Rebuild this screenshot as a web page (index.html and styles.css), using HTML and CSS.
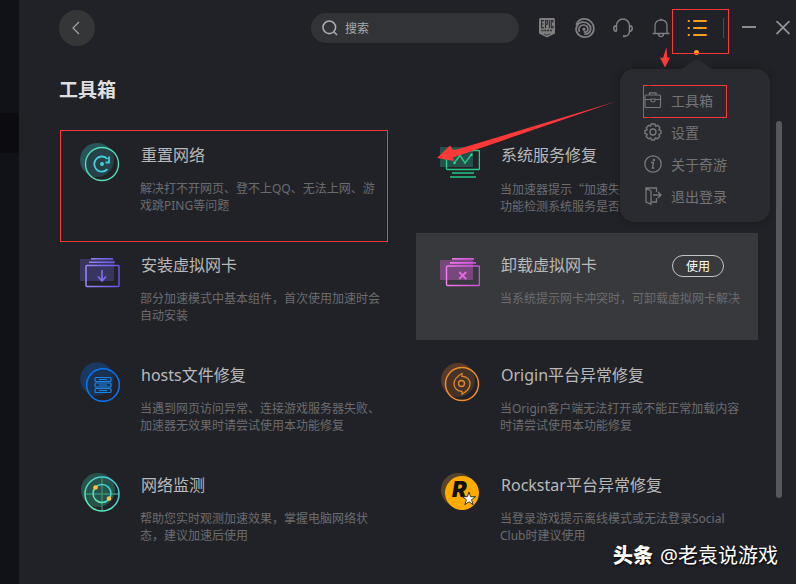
FILE: index.html
```
<!DOCTYPE html>
<html lang="zh-CN">
<head>
<meta charset="utf-8">
<meta name="viewport" content="width=device-width, initial-scale=1">
<title>工具箱</title>
<link rel="stylesheet" href="styles.css">
</head>
<body>
<div class="app">
  <aside class="sidebar"><div class="sidebar-active"></div></aside>
  <main class="main">
    <header class="topbar">
      <button class="back" type="button" aria-label="返回">
        <svg width="12" height="14" viewBox="0 0 12 14"><path d="M8 1 2 7l6 6" fill="none" stroke="#a4a4a6" stroke-width="1.200"/></svg>
      </button>
      <label class="search">
        <svg width="16" height="16" viewBox="0 0 16 16" fill="none" stroke="#a9aaac" stroke-width="1.600"><circle cx="7.300" cy="7.300" r="6.300"/><path d="m11.800 11.800 3.200 3.200"/></svg>
        <input type="search" placeholder="搜索" aria-label="搜索">
      </label>
      <nav class="actions">
        <button class="action" type="button" aria-label="Epic Games">
          <svg width="16" height="20" viewBox="0 0 16 20"><path d="M1.500 0h13Q16 0 16 1.500v14L8 19.500 0 15.500v-14Q0 0 1.500 0z" fill="#7f7f81"/><g fill="none" stroke="#2c2d31" stroke-width="1.100"><path d="M5 2.600H2.600v7H5M2.600 6h2M6.500 10.200V2.600h1.900v3.600H6.500M10.400 2v8.200M14 4.700V2.600h-1.700v7H14V7.500"/><path d="M2.500 12.600h11" stroke-width="1.500" stroke-dasharray="2 .8"/><path d="M5 15.900 8 17.300l3-1.400" stroke-width=".8"/></g></svg>
        </button>
        <button class="action" type="button" aria-label="Ubisoft">
          <svg width="20" height="20" viewBox="0 0 20 20" fill="none" stroke="#7f7f81" stroke-linecap="round"><path d="M1.500 6.200C4-.2 12-.6 16.300 4c3.800 4.200 3.200 10.500-1 13.400-4.400 3-10.800 1.800-13.400-2.900C-.2 10.500 2.200 5 7 4.200c4.800-.8 8.600 2.600 8.700 6.400.1 3.600-2.700 5.700-5.700 5.600" stroke-width="1.800"/><path d="M4.200 13.300C3 10 5 7.200 8.200 7c3.300-.1 5.100 2.300 4.700 4.700-.3 1.900-2 2.700-3.500 2.200" stroke-width="1.700"/><circle cx="9" cy="11.200" r="1.600" fill="#7f7f81" stroke="none"/></svg>
        </button>
        <button class="action" type="button" aria-label="客服">
          <svg width="20" height="20" viewBox="0 0 20 20" fill="none" stroke="#7f7f81" stroke-width="1.500"><path d="M3.500 13.500V8C3.500 3.800 6.300 1 10 1s6.500 2.800 6.500 7v5.500M3.500 7.500C-.2 8-.2 13 3.500 13.500M16.500 7.500c3.700.5 3.700 5.500 0 6-.3 2.800-2 4.500-4.800 4.700"/><path d="M10 18.200h2.500" stroke-width="2"/></svg>
        </button>
        <button class="action" type="button" aria-label="通知">
          <svg width="20" height="20" viewBox="0 0 20 20" fill="none" stroke="#7f7f81" stroke-width="1.300"><path d="M1.500 15.500h17M4 15.500V8c0-3.800 2.300-6 6-6s6 2.200 6 6v7.500M7.500 16c.3 3.500 4.700 3.500 5 0M9 1.300h2"/></svg>
        </button>
        <div class="menu-anchor">
          <button class="menu-button" type="button" aria-label="菜单" aria-expanded="true">
            <svg width="20" height="18" viewBox="0 0 20 18" fill="none" stroke="#ffa016" stroke-width="1.800" stroke-linecap="round"><path d="M1.500 2h.6M7 2h12M1.500 9h.6M7 9h12M1.500 16h.6M7 16h12"/></svg>
          </button>
          <span class="menu-dot"></span>
          <span class="mark mark-button"></span>
          <svg class="arrow-down" width="12" height="24" viewBox="0 0 12 24"><path d="m7.500 2 .8 10.500h2.700L6 22.500 1 12.500l3 .5z" fill="#ff3838"/></svg>
          <svg class="arrow-long" width="184" height="64" viewBox="0 0 184 64"><path d="m1 58 13-12.500 3.500 5L180 1.500 17 57.500l1.300 3.500z" fill="#ff3838"/></svg>
          <div class="menu">
            <svg class="menu-tip" width="40" height="11" viewBox="0 0 40 11"><path d="M0 11C10 10 13 1 20 1s10 9 20 10z" fill="#2a2b30"/></svg>
            <a class="menu-item" href="#toolbox">
              <svg width="18" height="18" viewBox="0 0 18 18" fill="none" stroke="#77787b" stroke-width="1.200"><rect x="1" y="4" width="15.500" height="12.500" rx="1"/><path d="M5.500 4V1.800h6.500V4M1 8.500h6m4 0h5.500M7 8h4v1.500c0 2-4 2-4 0z"/></svg>
              <span>工具箱</span><span class="mark mark-item"></span>
            </a>
            <a class="menu-item" href="#settings">
              <svg width="18" height="18" viewBox="0 0 18 18" fill="none" stroke="#77787b" stroke-width="1.400"><path d="M7 1h4l.6 2.200 2-.9 2.300 2.500-1 2L17 7.600v3l-2.200.7.9 2.100-2.400 2.400-2-1L10.500 17h-3l-.8-2.200-2.100 1-2.400-2.300 1-2.200L1 10.500v-3l2.200-.7-.9-2 2.400-2.500 1.900.9z" stroke-linejoin="round"/><circle cx="9" cy="9" r="3"/></svg>
              <span>设置</span>
            </a>
            <a class="menu-item" href="#about">
              <svg width="18" height="18" viewBox="0 0 18 18" fill="none" stroke="#77787b" stroke-width="1.300"><circle cx="9" cy="9" r="8.200"/><path d="M7 7.500h2.500L8.300 13h2"/><circle cx="9.900" cy="4.900" r=".6" fill="#77787b"/></svg>
              <span>关于奇游</span>
            </a>
            <a class="menu-item" href="#logout">
              <svg width="18" height="18" viewBox="0 0 18 18" fill="none" stroke="#77787b" stroke-width="1.300"><path d="M2 1h10.500v4M12.500 11v4H7M2 1v14l5 2.200V4zM9 8h8m-3-3 3 3-3 3"/></svg>
              <span>退出登录</span>
            </a>
          </div>
        </div>
        <span class="divider"></span>
        <button class="minimize" type="button" aria-label="最小化"><svg width="14" height="14" viewBox="0 0 14 14"><path d="M0 6h14" stroke="#8c8c8e" stroke-width="2"/></svg></button>
        <button class="close" type="button" aria-label="关闭"><svg width="14" height="14" viewBox="0 0 14 14"><path d="m.5 0 13 13m0-13-13 13" stroke="#929294" stroke-width="1.800"/></svg></button>
      </nav>
    </header>
    <h1 class="heading" id="toolbox">工具箱</h1>
    <div class="content">
      <div class="tools">
        <article class="tool tool-marked">
          <svg class="icon" viewBox="0 0 40 40" fill="none"><defs><linearGradient id="teal" x1="0" y1="1" x2="1" y2="0"><stop stop-color="#60edaa"/><stop offset="1" stop-color="#3fc5e0"/></linearGradient></defs><circle cx="17" cy="18" r="17" fill="#28545a"/><circle cx="22" cy="22" r="16.500" fill="#212227" fill-opacity=".35" stroke="#52dcb8" stroke-width="1.400"/><path d="M27.500 17A7.600 7.600 0 1 0 27.500 27.200M29 14.500v6h-3.500" stroke="#43cfe0" stroke-width="1.800"/><circle cx="22" cy="22" r="2" fill="#43cfe0"/></svg>
          <div class="tool-text"><h2>重置网络</h2><p>解决打不开网页、登不上QQ、无法上网、游戏跳PING等问题</p></div>
        </article>
        <article class="tool">
          <svg class="icon" viewBox="0 0 40 40" fill="none"><path d="M0 5h33v20H0z" fill="#26514a"/><g stroke="#25c886" stroke-width="1.500"><rect x="6.500" y="8.500" width="33" height="19" rx="1"/><path d="M12 31h22M10 35h26"/><path d="m14.500 20.500 5.500-7 5 7.500 6.500-8.500"/></g><circle cx="14.500" cy="21" r="1.200" fill="#35d894"/><circle cx="31.500" cy="12.800" r="1.200" fill="#35d894"/></svg>
          <div class="tool-text"><h2>系统服务修复</h2><p class="cjk">当加速器提示“加速失<br>功能检测系统服务是否</p></div>
        </article>
        <article class="tool">
          <svg class="icon" viewBox="0 0 40 40" fill="none"><defs><linearGradient id="violet"><stop stop-color="#9a87fa"/><stop offset="1" stop-color="#6355df"/></linearGradient></defs><rect y="7" width="34" height="22" rx="1" fill="#38355f"/><rect x="6" y="13.500" width="33" height="21" rx="1" stroke="url(#violet)" stroke-width="1.500"/><path d="M9 9.500h26v1.500H9zM11 6h22v1.500H11z" fill="url(#violet)"/><path d="M22 18v11m-4-4.500 4 4.500 4-4.500" stroke="#7c6eef" stroke-width="1.700"/></svg>
          <div class="tool-text"><h2>安装虚拟网卡</h2><p>部分加速模式中基本组件，首次使用加速时会自动安装</p></div>
        </article>
        <article class="tool tool-active">
          <svg class="icon" viewBox="0 0 40 40" fill="none"><defs><linearGradient id="pink"><stop stop-color="#f07bea"/><stop offset="1" stop-color="#cf4bdc"/></linearGradient></defs><rect y="8" width="33" height="20" rx="1" fill="#76487b"/><rect x="6.500" y="14" width="33" height="19.500" rx="1" stroke="url(#pink)" stroke-width="1.500"/><path d="M10 10h26v1.700H10zM12 6h22v1.700H12z" fill="url(#pink)"/><path d="m19.200 20 7 7m0-7-7 7" stroke="#e867e8" stroke-width="1.800"/></svg>
          <div class="tool-text"><h2>卸载虚拟网卡</h2><p>当系统提示网卡冲突时，可卸载虚拟网卡解决</p></div>
          <button class="use" type="button">使用</button>
        </article>
        <article class="tool">
          <svg class="icon" viewBox="0 0 40 40" fill="none"><circle cx="17" cy="17" r="16.700" fill="#193862"/><circle cx="23" cy="23" r="16.300" fill="#212227" fill-opacity=".3" stroke="#0876f4" stroke-width="1.500"/><g stroke="#1687e6" stroke-width="1.200"><rect x="15" y="15.500" width="16" height="4" rx="1"/><rect x="15" y="21" width="16" height="4" rx="1"/><rect x="15" y="26.500" width="16" height="4" rx="1"/><path d="M19 17.500h8M19 23h8M19 28.500h8"/></g></svg>
          <div class="tool-text"><h2>hosts文件修复</h2><p>当遇到网页访问异常、连接游戏服务器失败、加速器无效果时请尝试使用本功能修复</p></div>
        </article>
        <article class="tool">
          <svg class="icon" viewBox="0 0 40 40" fill="none"><circle cx="18" cy="18" r="17" fill="#573a27"/><circle cx="22" cy="22" r="16.500" fill="#212227" fill-opacity=".3" stroke="#ed8c2d" stroke-width="1.500"/><g stroke="#dc8b2c" stroke-width="1.300"><circle cx="21.500" cy="21.500" r="3"/><path d="M22 11.500v2.800c4.500 0 8 3 8 7.500 0 5-3.500 7.500-8 10.500v-3c-4.500 0-8-3-8-7.500 0-5 3.500-7.800 8-10.300z"/></g></svg>
          <div class="tool-text"><h2>Origin平台异常修复</h2><p>当Origin客户端无法打开或不能正常加载内容时请尝试使用本功能修复</p></div>
        </article>
        <article class="tool">
          <svg class="icon" viewBox="0 0 40 40" fill="none"><circle cx="18" cy="18" r="17" fill="#27534a"/><path d="M22 5v34M5 22h34" stroke="#3b9277" stroke-width="1.300"/><g stroke="url(#teal)" stroke-width="1.500"><circle cx="22" cy="22" r="17"/><circle cx="22" cy="21.500" r="9"/></g><circle cx="15.500" cy="15.500" r="2.300" fill="#ffc04b"/><circle cx="29" cy="26.500" r="2.300" fill="#ffc04b"/></svg>
          <div class="tool-text"><h2>网络监测</h2><p>帮助您实时观测加速效果，掌握电脑网络状态，建议加速后使用</p></div>
        </article>
        <article class="tool">
          <svg class="icon" viewBox="0 0 40 40"><circle cx="18" cy="18" r="17" fill="#57452b"/><circle cx="22" cy="21" r="17" fill="#ffab00"/><text class="rockstar" x="12" y="25">R</text><path d="m29 20 1.500 4.700h5l-4 3 1.500 5-4-3-4.200 3 1.600-5-4-3h5z" fill="#fff" stroke="#111" stroke-width=".8"/></svg>
          <div class="tool-text"><h2>Rockstar平台异常修复</h2><p>当登录游戏提示离线模式或无法登录Social Club时建议使用</p></div>
        </article>
      </div>
      <div class="scrollbar"></div>
    </div>
  </main>
  <div class="watermark"><b>头条</b><span>@老袁说游戏</span></div>
</div>
</body>
</html>
```
FILE: styles.css
```
* { box-sizing: border-box; }

body {
  margin: 0;
  background: #212227;
  color: #b9b9bb;
  font: 12px/17px "Noto Sans", "Noto Sans CJK SC", sans-serif;
}

h1, h2, p { margin: 0; font-weight: 400; }

button {
  display: flex;
  align-items: center;
  justify-content: center;
  padding: 0;
  border: 0;
  background: none;
  color: inherit;
  font: inherit;
}

.app {
  position: relative;
  display: flex;
  height: 100vh;
  overflow: hidden;
}

.sidebar {
  flex: 0 0 19px;
  padding-top: 113px;
  background: #111217;
}

.sidebar-active { height: 40px; background: #0c0b0f; }

.main { flex: 1; min-width: 0; }

.topbar {
  display: flex;
  align-items: center;
  height: 56px;
  padding-left: 40px;
}

.back {
  width: 36px;
  height: 36px;
  border-radius: 50%;
  background: #353638;
}

.search {
  display: flex;
  align-items: center;
  gap: 7px;
  width: 208px;
  height: 30px;
  margin: 0 9px 0 auto;
  padding: 0 11px;
  border-radius: 15px;
  background: #323337;
}

.search input {
  flex: 1;
  min-width: 0;
  padding: 0;
  border: 0;
  outline: 0;
  background: none;
  color: #a9aaac;
  font: inherit;
}

.search input::placeholder { color: #a9aaac; }

.actions { display: flex; align-items: center; height: 56px; }
.action { width: 38px; height: 38px; }

.menu-anchor { position: relative; width: 34px; height: 56px; }
.menu-button { width: 34px; height: 56px; }

.menu-dot {
  position: absolute;
  top: 50px;
  left: 14px;
  width: 5px;
  height: 5px;
  border-radius: 50%;
  background: #ffa016;
}

.mark {
  position: absolute;
  border: 1px solid #ff3838;
  pointer-events: none;
}

.mark-button { top: 9px; left: -8px; width: 57px; height: 45px; }
.mark-item { top: 1px; left: 23px; width: 84px; height: 33px; }

.arrow-down { position: absolute; top: 45px; left: -21px; z-index: 3; }
.arrow-long { position: absolute; top: 100px; left: -244px; z-index: 1; }

.menu {
  position: absolute;
  top: 69px;
  right: -56px;
  z-index: 2;
  width: 150px;
  padding: 15px 0 10px;
  border-radius: 14px;
  background: #2a2b30;
  box-shadow: 0 0 6px #17181c;
}

.menu-tip { position: absolute; top: -10px; left: 57px; }

.menu-item {
  position: relative;
  display: flex;
  align-items: center;
  gap: 9px;
  height: 32px;
  padding-left: 24px;
  color: #737477;
  font-size: 14px;
  text-decoration: none;
}

.divider { width: 1px; height: 20px; margin: 0 4px 0 9px; background: #4b4c50; }
.minimize { width: 42px; height: 38px; }
.close { width: 26px; height: 38px; }

.heading {
  margin: 20px 0 17px 40px;
  color: #dededf;
  font-size: 19px;
  font-weight: 700;
  line-height: 28px;
}

.content {
  display: flex;
  gap: 18px;
  padding: 0 14px 0 37px;
}

.tools {
  flex: 1;
  display: grid;
  grid-template-columns: 1fr 1fr;
  grid-auto-rows: 107px;
  gap: 3px 18px;
  padding-top: 2px;
}

.tool {
  position: relative;
  display: flex;
  gap: 20px;
  padding: 19px 14px 0 24px;
}

.tool-active { background: #38393c; }

.tool-marked::after {
  content: "";
  position: absolute;
  inset: 7px 10px -12px 4px;
  border: 1px solid #ff3838;
}

.icon { flex: 0 0 40px; height: 40px; }
.tool-text { flex: 1; min-width: 0; }
.tool h2 { margin-bottom: 12px; padding-left: 1px; font-size: 16px; line-height: 26px; }
.tool p { color: #6b6c70; }
.tool .cjk { font-family: "Noto Sans CJK SC", sans-serif; }

.use {
  position: absolute;
  top: 22px;
  right: 34px;
  width: 52px;
  height: 22px;
  border: 1px solid #c4c4c5;
  border-radius: 11px;
  color: #fff;
}

.rockstar {
  fill: #111;
  font: italic 900 22px Inter, "Liberation Sans", sans-serif;
}

.scrollbar {
  flex: 0 0 6px;
  height: 377px;
  border-radius: 3px;
  background: #56585d;
}

.watermark {
  position: absolute;
  right: 18px;
  bottom: 14px;
  display: flex;
  gap: 7px;
  color: #fff;
  font-size: 20px;
  line-height: 28px;
  text-shadow: 1px 1px 2px #000;
}

.watermark b { font-weight: 900; }
```
